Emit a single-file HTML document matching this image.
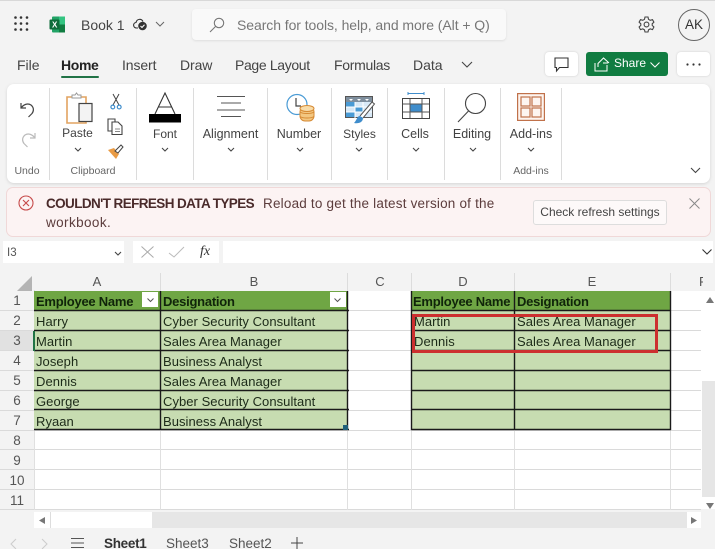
<!DOCTYPE html>
<html><head><meta charset="utf-8"><style>
html,body{margin:0;padding:0;overflow:hidden}
body{width:715px;height:549px;overflow:hidden;background:#f3f3f3;position:relative;font-family:"Liberation Sans",sans-serif;color:#424242}
.t{position:absolute;white-space:nowrap;line-height:16px;font-size:13.5px}
.c{transform:translateX(-50%);text-align:center}
.b{position:absolute}
.s{position:absolute;top:88px;width:1px;height:92px;background:#dcdcdc}
.g{position:absolute;color:#1c2a18;font-size:13px;line-height:20px;white-space:nowrap;letter-spacing:.05px}
.h{font-weight:bold;color:#10240a;letter-spacing:-.25px}
.r{position:absolute;width:34px;text-align:center;left:0;font-size:13.5px;line-height:20px;color:#555}
.ch{position:absolute;top:273px;font-size:13px;line-height:18px;color:#555;transform:translateX(-50%)}
svg{position:absolute;overflow:visible}
</style></head><body>
<div class="b" style="left:0;top:0;width:715px;height:1px;background:#d8d8d8"></div>

<!-- top bar -->
<svg style="left:14px;top:16px" width="16" height="16" fill="#333"><circle cx="1.5" cy="1.5" r="1.3"/><circle cx="7" cy="1.5" r="1.3"/><circle cx="13" cy="1.5" r="1.3"/><circle cx="1.5" cy="7.5" r="1.3"/><circle cx="7" cy="7.5" r="1.3"/><circle cx="13" cy="7.5" r="1.3"/><circle cx="1.5" cy="13.5" r="1.3"/><circle cx="7" cy="13.5" r="1.3"/><circle cx="13" cy="13.5" r="1.3"/></svg>
<svg style="left:49px;top:16px" width="18" height="17"><rect x="3" y="0.5" width="13" height="16" rx="1" fill="#21a366"/><rect x="10" y="0.5" width="6" height="8" fill="#33c481"/><rect x="10" y="8.5" width="6" height="8" fill="#107c41"/><rect x="0.5" y="3.5" width="10" height="10" rx="1" fill="#0e6b3a"/><text x="3" y="11.5" font-size="8" font-weight="bold" fill="#fff" font-family="Liberation Sans">X</text></svg>
<div class="t" style="left:81px;top:17px;font-size:14px;color:#444">Book 1</div>
<svg style="left:132px;top:17px" width="18" height="15" fill="none" stroke="#333" stroke-width="1.1"><path d="M6 11H4.500C1 11 0.500 6 4 5.500C5 1.500 9.500 1.500 11 4.500"/><circle cx="10.500" cy="9" r="4.300" fill="#333" stroke="none"/><path d="M8.500 9l1.500 1.500 2.500-2.700" stroke="#fff"/></svg>
<svg style="left:155px;top:21px" width="10" height="6" fill="none" stroke="#666"><path d="M1 1l4 4 4-4"/></svg>
<div class="b" style="left:192px;top:9px;width:314px;height:31px;background:#f9f9f9;border-radius:4px;box-shadow:0 1px 2px #ddd"></div>
<svg style="left:209px;top:17px" width="16" height="16" fill="none" stroke="#777" stroke-width="1.100"><circle cx="10" cy="6" r="4.700"/><path d="M6.500 9.500L1 15"/></svg>
<div class="t" style="left:237px;top:17px;font-size:14px;color:#777;letter-spacing:-.07px">Search for tools, help, and more (Alt + Q)</div>
<svg style="left:638px;top:16px" width="17" height="17" fill="none" stroke="#444" stroke-width="1.100"><path d="M7 1h3l.5 2.300 1.700 1 2.300-.7 1.400 2.600-1.700 1.600v1.600l1.700 1.600-1.400 2.600-2.300-.7-1.700 1L10 16H7l-.5-2.100-1.700-1-2.300.7-1.400-2.600 1.700-1.600V7.800L1.100 6.200l1.400-2.600 2.300.7 1.700-1z"/><circle cx="8.500" cy="8.500" r="2.400"/></svg>
<div class="b" style="left:678px;top:9px;width:30px;height:30px;border:1px solid #666;border-radius:50%;text-align:center;line-height:30px;font-size:13.500px;color:#333">AK</div>

<!-- tabs -->
<div class="t" style="left:17px;top:57px;font-size:14px;color:#444">File</div>
<div class="t" style="left:61px;top:57px;font-size:14px;color:#222;font-weight:bold;letter-spacing:-.35px">Home</div>
<div class="b" style="left:61px;top:76px;width:38px;height:2px;background:#217346;border-radius:1px"></div>
<div class="t" style="left:122px;top:57px;font-size:14px;color:#444;letter-spacing:-.1px">Insert</div>
<div class="t" style="left:180px;top:57px;font-size:14px;color:#444;letter-spacing:-.1px">Draw</div>
<div class="t" style="left:235px;top:57px;font-size:14px;color:#444;letter-spacing:-.35px">Page Layout</div>
<div class="t" style="left:334px;top:57px;font-size:14px;color:#444;letter-spacing:-.3px">Formulas</div>
<div class="t" style="left:413px;top:57px;font-size:14px;color:#444">Data</div>
<svg style="left:461px;top:61px" width="12" height="7" fill="none" stroke="#444" stroke-width="1.100"><path d="M1 1l5 5 5-5"/></svg>
<div class="b" style="left:545px;top:52px;width:33px;height:24px;background:#fff;border-radius:4px;box-shadow:0 0 2px #ccc"></div>
<svg style="left:554px;top:57px" width="16" height="15" fill="none" stroke="#333" stroke-width="1.100"><path d="M1 1h13v9.500H5.500L2.500 14v-3.500H1z"/></svg>
<div class="b" style="left:586px;top:52px;width:82px;height:24px;background:#107c41;border-radius:3px"></div>
<svg style="left:594px;top:57px" width="16" height="15" fill="none" stroke="#fff" stroke-width="1"><path d="M1 6v8h12V8M4 10V6.500L9.500 1l5 4.500-1 .5H9"/></svg>
<div class="t" style="left:614px;top:56px;font-size:12px;color:#fff;line-height:15px">Share</div>
<svg style="left:650px;top:62px" width="10" height="6" fill="none" stroke="#fff"><path d="M.500.500L5 5 9.500.500"/></svg>
<div class="b" style="left:677px;top:52px;width:33px;height:24px;background:#fff;border-radius:4px;box-shadow:0 0 2px #ccc"></div>
<svg style="left:686px;top:63px" width="15" height="3" fill="#333"><circle cx="1.500" cy="1.500" r="1.100"/><circle cx="7.500" cy="1.500" r="1.100"/><circle cx="13.500" cy="1.500" r="1.100"/></svg>

<!-- ribbon -->
<div class="b" style="left:7px;top:84px;width:703px;height:99px;background:#fff;border-radius:7px;box-shadow:0 1px 3px #d4d4d4"></div>
<div class="s" style="left:49px"></div><div class="s" style="left:136px"></div><div class="s" style="left:193px"></div><div class="s" style="left:267px"></div><div class="s" style="left:331px"></div><div class="s" style="left:387px"></div><div class="s" style="left:444px"></div><div class="s" style="left:500px"></div><div class="s" style="left:561px"></div>

<svg style="left:20px;top:101px" width="16" height="17" fill="none" stroke="#444" stroke-width="1.200"><path d="M1 2v5h5M1 7c3-4 7-5 10-3 3 2.500 3 6 1 8.500L8.500 16"/></svg>
<svg style="left:20px;top:131px" width="16" height="17" fill="none" stroke="#bbb" stroke-width="1.200"><path d="M15 2v5h-5M15 7c-3-4-7-5-10-3-3 2.500-3 6-1 8.500L7.500 16"/></svg>
<div class="t c" style="left:27px;top:164px;font-size:10.500px;color:#666;line-height:14px">Undo</div>

<svg style="left:65px;top:92px" width="30" height="32" fill="none"><path d="M2 5h19v26H2z" fill="#fff" stroke="#e2a360" stroke-width="1.600"/><path d="M7 6V3h3l1.500-2 1.500 2h3v3z" fill="#fff" stroke="#999"/><rect x="14" y="11.500" width="13" height="18" fill="#f3f3f3" stroke="#444" stroke-width="1.200"/></svg>
<div class="t c" style="left:77.500px;top:125px;font-size:12px">Paste</div>
<svg style="left:74px;top:147px" width="8" height="5" fill="none" stroke="#444" stroke-width="1.100"><path d="M1 1l3 3 3-3"/></svg>
<svg style="left:110px;top:94px" width="12" height="16" fill="none"><path d="M3 0l6 11M9 0L3 11" stroke="#444"/><circle cx="2.800" cy="13" r="1.900" stroke="#3f8dcc" stroke-width="1.200"/><circle cx="9.200" cy="13" r="1.900" stroke="#3f8dcc" stroke-width="1.200"/></svg>
<svg style="left:107px;top:118px" width="17" height="17" fill="none" stroke="#444" stroke-width="1.100"><path d="M1 1h7v12H1z"/><path d="M5 4h6l4 4v8.500H5z" fill="#fff"/><path d="M8 11h5M8 13.500h5" stroke="#888"/></svg>
<svg style="left:107px;top:144px" width="17" height="16"><path d="M1 6l6-2 5 6-3 5z" fill="#e99b45"/><path d="M8 7l6-6 2 2-5 6z" fill="#fff" stroke="#444"/></svg>
<div class="t c" style="left:93px;top:164px;font-size:10.500px;color:#666;line-height:14px">Clipboard</div>

<svg style="left:149px;top:92px" width="32" height="31" fill="none"><path d="M6 22L16 1l10 21M9.500 15h13" stroke="#333" stroke-width="1.100"/><rect y="22" width="32" height="8.500" fill="#000"/></svg>
<div class="t c" style="left:165px;top:126px;font-size:12px">Font</div>
<svg style="left:161px;top:147px" width="8" height="5" fill="none" stroke="#444" stroke-width="1.100"><path d="M1 1l3 3 3-3"/></svg>

<svg style="left:217px;top:96px" width="28" height="22" stroke="#555" stroke-width="1.100"><path d="M0 .5h28M4 7h20M0 14h28M4 20.500h20"/></svg>
<div class="t c" style="left:230.500px;top:126px;font-size:12.500px">Alignment</div>
<svg style="left:227px;top:147px" width="8" height="5" fill="none" stroke="#444" stroke-width="1.100"><path d="M1 1l3 3 3-3"/></svg>

<svg style="left:285px;top:93px" width="32" height="30" fill="none"><circle cx="12" cy="11.500" r="10" fill="#fff" stroke="#4a9bd5" stroke-width="1.200"/><path d="M11 5v8h5" stroke="#444" stroke-width="1.200"/><rect x="15" y="14" width="14" height="14" rx="5" fill="#f3c781" stroke="#d68a34"/><path d="M15 19c3 2 11 2 14 0M15 23.500c3 2 11 2 14 0" stroke="#d68a34"/><ellipse cx="22" cy="15.500" rx="7" ry="3" fill="#f8dca9" stroke="#d68a34"/></svg>
<div class="t c" style="left:299px;top:126px;font-size:12.500px">Number</div>
<svg style="left:296px;top:147px" width="8" height="5" fill="none" stroke="#444" stroke-width="1.100"><path d="M1 1l3 3 3-3"/></svg>

<svg style="left:345px;top:96px" width="31" height="29" fill="none"><rect x=".5" y=".5" width="27" height="21" fill="#d8e9f7" stroke="#555"/><rect x="1" y="1" width="26" height="5" fill="#7f8f9e"/><path d="M4 3h4l-2 2zM12 3h4l-2 2zM20 3h4l-2 2z" fill="#fff"/><rect x="1" y="6" width="9" height="5" fill="#4a9bd5"/><rect x="1" y="16" width="9" height="5" fill="#4a9bd5"/><rect x="10" y="11" width="8" height="5" fill="#4a9bd5"/><path d="M1 11h26M1 16h26M10 6v16M18 6v16" stroke="#fff"/><path d="M15 20L27 6l2.500 2L18 22" fill="#fff" stroke="#555"/><path d="M9 27c5 1 9-1 9-5l-3-2c-3 0-3 4-6 7z" fill="#3f8dcc"/></svg>
<div class="t c" style="left:359.500px;top:126px;font-size:12px">Styles</div>
<svg style="left:355px;top:147px" width="8" height="5" fill="none" stroke="#444" stroke-width="1.100"><path d="M1 1l3 3 3-3"/></svg>

<svg style="left:402px;top:91px" width="28" height="28" fill="none"><path d="M6 2.500h16M6 1v3M22 1v3" stroke="#3f8dcc"/><rect x=".5" y="7.500" width="27" height="20" stroke="#444" fill="#fff"/><rect x="8" y="13" width="12" height="8" fill="#3f8dcc"/><path d="M1 13h26M1 21h26M8 8v19M20 8v19" stroke="#555"/></svg>
<div class="t c" style="left:415px;top:126px;font-size:12.500px">Cells</div>
<svg style="left:412px;top:147px" width="8" height="5" fill="none" stroke="#444" stroke-width="1.100"><path d="M1 1l3 3 3-3"/></svg>

<svg style="left:457px;top:93px" width="30" height="30" fill="none" stroke="#444" stroke-width="1.100"><circle cx="18.500" cy="10.500" r="10"/><path d="M11.500 18L1 29"/></svg>
<div class="t c" style="left:472px;top:126px;font-size:12.500px">Editing</div>
<svg style="left:469px;top:147px" width="8" height="5" fill="none" stroke="#444" stroke-width="1.100"><path d="M1 1l3 3 3-3"/></svg>

<svg style="left:517px;top:93px" width="28" height="28" fill="#fdf5f0" stroke="#c0714a" stroke-width="1.200"><rect x=".6" y=".6" width="26.800" height="26.800"/><rect x="4" y="4" width="9" height="9"/><rect x="15" y="4" width="9" height="9"/><rect x="4" y="15" width="9" height="9"/><rect x="15" y="15" width="9" height="9"/></svg>
<div class="t c" style="left:531px;top:126px;font-size:12.500px">Add-ins</div>
<svg style="left:527px;top:147px" width="8" height="5" fill="none" stroke="#444" stroke-width="1.100"><path d="M1 1l3 3 3-3"/></svg>
<div class="t c" style="left:531px;top:164px;font-size:10.500px;color:#666;line-height:14px">Add-ins</div>
<svg style="left:690px;top:167px" width="11" height="7" fill="none" stroke="#444" stroke-width="1.100"><path d="M1 1l4.500 4.500L10 1"/></svg>

<!-- banner -->
<div class="b" style="left:6px;top:187px;width:703px;height:48px;background:#fcf3f3;border:1px solid #f0d8d8;border-radius:7px"></div>
<svg style="left:18px;top:195px" width="16" height="16" fill="none" stroke="#c64a4a" stroke-width="1.100"><circle cx="8" cy="8" r="7"/><path d="M5 5l6 6M11 5l-6 6"/></svg>
<div class="t" style="left:46px;top:196px;font-size:13.500px;color:#4a2a2a;line-height:16px;font-weight:bold;letter-spacing:-.6px">COULDN'T REFRESH DATA TYPES</div>
<div class="t" style="left:263px;top:196px;font-size:13.500px;color:#5c3c3c;letter-spacing:.2px">Reload to get the latest version of the</div>
<div class="t" style="left:46px;top:215px;font-size:13.500px;color:#5c3c3c;letter-spacing:.4px">workbook.</div>
<div class="b" style="left:533px;top:200px;width:132px;height:23px;background:#fdf9f9;border:1px solid #ddd;border-radius:3px;text-align:center;font-size:12px;line-height:23px;color:#444;white-space:nowrap">Check refresh settings</div>
<svg style="left:689px;top:198px" width="11" height="11" fill="none" stroke="#888"><path d="M.500.500l10 10M10.500.500l-10 10"/></svg>

<!-- formula bar -->
<div class="b" style="left:3px;top:241px;width:121px;height:22px;background:#fff"></div>
<div class="t" style="left:7px;top:246px;font-size:11.500px;color:#555;line-height:15px">I3</div>
<svg style="left:114px;top:251px" width="8" height="5" fill="none" stroke="#444" stroke-width="1.100"><path d="M1 1l3 3 3-3"/></svg>
<div class="b" style="left:133px;top:241px;width:86px;height:22px;background:#fff"></div>
<svg style="left:141px;top:246px" width="13" height="12" fill="none" stroke="#aaa"><path d="M.500.500l12 11M12.500.500l-12 11"/></svg>
<svg style="left:168px;top:246px" width="17" height="12" fill="none" stroke="#bbb"><path d="M1 7l5 4L16 1"/></svg>
<div class="t" style="left:200px;top:244px;font-family:'Liberation Serif',serif;font-style:italic;font-size:14px;color:#333">fx</div>
<div class="b" style="left:223px;top:241px;width:490px;height:22px;background:#fff"></div>
<svg style="left:702px;top:249px" width="10" height="6" fill="none" stroke="#333" stroke-width="1.100"><path d="M.500.500L5 5 9.500.500"/></svg>

<!-- grid -->
<div class="b" style="left:34px;top:291px;width:667px;height:218px;background:#fff"></div>
<div class="b" style="left:0;top:330px;width:34px;height:20px;background:#e1e1e1"></div>
<svg style="left:0;top:270px" width="715" height="240" fill="none">
<path d="M17 21L32 6V21z" fill="#b4b4b4"/>
<path d="M160.500 3V20M347.500 3V20M411.500 3V20M514.500 3V20M670.500 3V20" stroke="#dcdcdc"/>
<path d="M0 40.500H701M0 60.500H701M0 80.500H701M0 100.500H701M0 120.500H701M0 140.500H701M0 160.500H701M0 179.500H701M0 199.500H701M0 219.500H701M0 239.500H701" stroke="#dadada"/>
<path d="M34.500 20V240M160.500 20V240M347.500 20V240M411.500 20V240M514.500 20V240M670.500 20V240" stroke="#e0e0e0"/>
</svg>

<!-- table 1 -->
<div class="b" style="left:34px;top:291px;width:314px;height:20px;background:#6fa644"></div>
<div class="b" style="left:34px;top:311px;width:314px;height:119px;background:#c7dcb1"></div>
<div class="b" style="left:411px;top:291px;width:260px;height:20px;background:#6fa644"></div>
<div class="b" style="left:411px;top:311px;width:260px;height:119px;background:#c7dcb1"></div>
<svg style="left:0;top:280px" width="715" height="160" fill="none" stroke="#1a1a1a" stroke-width="1.400">
<path d="M34 30.500H349M34 50.500H349M34 70.500H349M34 90.500H349M34 110.500H349M34 129.500H349M34 149.500H349M160.500 11V150M347.500 11V150"/>
<path d="M411 30.500H671M411 50.500H671M411 70.500H671M411 90.500H671M411 110.500H671M411 129.500H671M411 149.500H671M411.500 11V150M514.500 11V150M670.500 11V150"/>
</svg>
<div class="b" style="left:33px;top:331px;width:2px;height:20px;background:#217346"></div>
<div class="b" style="left:343px;top:425px;width:5px;height:5px;background:#1f5f7a"></div>

<!-- filter buttons -->
<div class="b" style="left:142px;top:292px;width:16px;height:15px;background:#fff"></div>
<svg style="left:147px;top:298px" width="7" height="4" fill="none" stroke="#555"><path d="M.500.500L3.500 3.500 6.500.500"/></svg>
<div class="b" style="left:330px;top:292px;width:16px;height:15px;background:#fff"></div>
<svg style="left:334px;top:298px" width="7" height="4" fill="none" stroke="#555"><path d="M.500.500L3.500 3.500 6.500.500"/></svg>

<!-- row headers -->
<div class="r" style="top:291px;left:0">1</div><div class="r" style="top:311px">2</div><div class="r" style="top:331px">3</div><div class="r" style="top:351px">4</div><div class="r" style="top:371px">5</div><div class="r" style="top:391px">6</div><div class="r" style="top:411px">7</div><div class="r" style="top:431px">8</div><div class="r" style="top:451px">9</div><div class="r" style="top:471px">10</div><div class="r" style="top:491px">11</div>
<div class="ch" style="left:97px">A</div><div class="ch" style="left:254px">B</div><div class="ch" style="left:380px">C</div><div class="ch" style="left:463px">D</div><div class="ch" style="left:592px">E</div>
<div class="b" style="left:671px;top:273px;width:32px;height:18px;overflow:hidden"><span style="position:absolute;left:28px;top:0;font-size:13px;line-height:18px;color:#555">F</span></div>

<!-- cells -->
<div class="g h" style="left:36px;top:292px">Employee Name</div><div class="g h" style="left:163px;top:292px">Designation</div>
<div class="g" style="left:36px;top:312px">Harry</div><div class="g" style="left:163px;top:312px">Cyber Security Consultant</div>
<div class="g" style="left:36px;top:332px">Martin</div><div class="g" style="left:163px;top:332px">Sales Area Manager</div>
<div class="g" style="left:36px;top:352px">Joseph</div><div class="g" style="left:163px;top:352px">Business Analyst</div>
<div class="g" style="left:36px;top:372px">Dennis</div><div class="g" style="left:163px;top:372px">Sales Area Manager</div>
<div class="g" style="left:36px;top:392px">George</div><div class="g" style="left:163px;top:392px">Cyber Security Consultant</div>
<div class="g" style="left:36px;top:412px">Ryaan</div><div class="g" style="left:163px;top:412px">Business Analyst</div>
<div class="g h" style="left:413px;top:292px">Employee Name</div><div class="g h" style="left:517px;top:292px">Designation</div>
<div class="g" style="left:414px;top:312px">Martin</div><div class="g" style="left:517px;top:312px">Sales Area Manager</div>
<div class="g" style="left:414px;top:332px">Dennis</div><div class="g" style="left:517px;top:332px">Sales Area Manager</div>

<!-- red box -->
<div class="b" style="left:412px;top:314px;width:240px;height:33px;border:3px solid #cc2f2f"></div>

<!-- v scrollbar -->
<div class="b" style="left:701px;top:291px;width:14px;height:218px;background:#fff"></div>
<div class="b" style="left:702px;top:381px;width:13px;height:116px;background:#e6e6e6"></div>
<svg style="left:706px;top:297px" width="8" height="6" fill="#777"><path d="M0 6L4 0l4 6z"/></svg>
<svg style="left:706px;top:503px" width="8" height="6" fill="#777"><path d="M0 0L4 6l4-6z"/></svg>
<!-- h scrollbar -->
<div class="b" style="left:34px;top:512px;width:653px;height:16px;background:#e6e6e6"></div>
<div class="b" style="left:34px;top:512px;width:118px;height:16px;background:#fff"></div>
<div class="b" style="left:50px;top:512px;width:1px;height:16px;background:#ddd"></div>
<div class="b" style="left:687px;top:512px;width:14px;height:16px;background:#fff"></div>
<svg style="left:39px;top:517px" width="6" height="7" fill="#777"><path d="M6 0L0 3.500 6 7z"/></svg>
<svg style="left:691px;top:517px" width="6" height="7" fill="#777"><path d="M0 0l6 3.500L0 7z"/></svg>

<!-- sheet tabs -->
<svg style="left:10px;top:538px" width="40" height="11" fill="none" stroke="#ccc"><path d="M6 1L1 6l5 5M32 1l5 5-5 5"/></svg>
<svg style="left:71px;top:538px" width="13" height="10" stroke="#555"><path d="M0 .500h13M0 5h13M0 9.500h13"/></svg>
<div class="t" style="left:104px;top:536px;font-size:13.500px;color:#333;font-weight:bold;letter-spacing:-.3px">Sheet1</div>
<div class="t" style="left:166px;top:536px;font-size:13.500px;color:#555">Sheet3</div>
<div class="t" style="left:229px;top:536px;font-size:13.500px;color:#555">Sheet2</div>
<svg style="left:291px;top:537px" width="12" height="12" stroke="#444"><path d="M6 0v12M0 6h12"/></svg>
</body></html>
